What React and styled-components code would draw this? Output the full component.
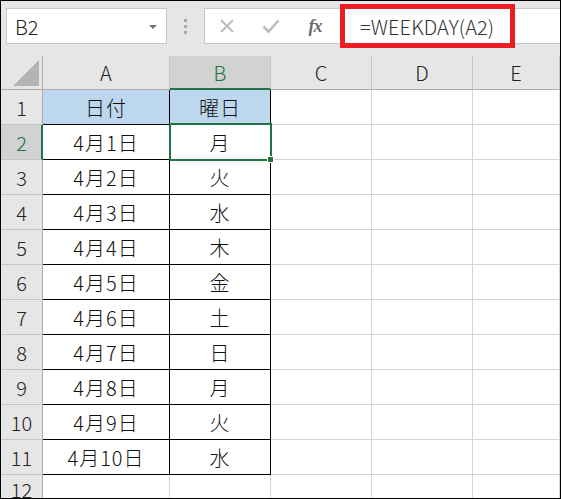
import React from "react";
import styled, { createGlobalStyle, css } from "styled-components";

const GlobalStyle = createGlobalStyle`
	html, body {
		margin: 0;
		padding: 0;
		background: #fff;
		overflow: hidden;
	}
	* {
		box-sizing: border-box;
	}
`;

const FONT = `"Noto Sans CJK JP", "Noto Sans", sans-serif`;
const GREEN = "#217346";

const Frame = styled.div`
	width: 561px;
	height: 499px;
	border: 1px solid #000;
	background: #e6e6e6;
	display: flex;
	flex-direction: column;
	overflow: hidden;
	font-family: ${FONT};
	font-weight: 300;
`;

const Toolbar = styled.div`
	height: 55px;
	flex: none;
	display: flex;
	align-items: flex-start;
	padding: 7px 0 0 5px;
`;

const NameBox = styled.div`
	width: 161px;
	height: 36px;
	background: #fff;
	border: 1px solid #c6c6c6;
	display: flex;
	align-items: center;
	justify-content: space-between;
	padding: 0 9px 0 8px;
	font-size: 20px;
	color: #222;
`;

const Caret = styled.span`
	width: 0;
	height: 0;
	border-left: 4px solid transparent;
	border-right: 4px solid transparent;
	border-top: 4px solid #707070;
	margin-top: 2px;
`;

const Grip = styled.div`
	width: 37px;
	height: 36px;
	display: flex;
	flex-direction: column;
	align-items: center;
	justify-content: center;
	gap: 3px;
	span {
		width: 3px;
		height: 3px;
		background: #a8a8a8;
	}
`;

const FormulaBox = styled.div`
	position: relative;
	flex: 1;
	height: 36px;
	background: #fff;
	border: 1px solid #c6c6c6;
	border-right: none;
	display: flex;
	align-items: center;
`;

const ToolIcon = styled.div`
	width: 44px;
	height: 100%;
	display: flex;
	align-items: center;
	justify-content: center;
	color: #bdbdbd;
`;

const Fx = styled.span`
	font-family: "Liberation Serif", serif;
	font-style: italic;
	font-weight: bold;
	font-size: 18px;
	color: #6e6e6e;
	letter-spacing: -1px;
`;

const FormulaText = styled.div`
	margin-left: 23px;
	font-size: 20px;
	color: #333;
	letter-spacing: 0.1px;
`;

const Highlight = styled.div`
	position: absolute;
	left: 135px;
	top: -5px;
	width: 175px;
	height: 44px;
	border: 5px solid #ec1c24;
	pointer-events: none;
`;

const Sheet = styled.div`
	flex: 1;
	display: grid;
	grid-template-columns: 42px 127px 101px 101px 101px 1fr;
	grid-template-rows: 34px repeat(11, 35px) 1fr;
	background: #fff;
`;

const Corner = styled.div`
	background: #e6e6e6;
	border-right: 1px solid #ababab;
	border-bottom: 1px solid #ababab;
	display: flex;
	align-items: flex-end;
	justify-content: flex-end;
	padding: 0 3px 3px 0;
`;

const ColHead = styled.div`
	background: ${(p) => (p.$active ? "#d2d2d2" : "#e6e6e6")};
	border-right: 1px solid #c4c4c4;
	border-bottom: ${(p) =>
		p.$active ? `2px solid ${GREEN}` : "1px solid #ababab"};
	color: ${(p) => (p.$active ? GREEN : "#222")};
	font-size: 20px;
	display: flex;
	align-items: center;
	justify-content: center;
	padding-top: ${(p) => (p.$active ? "1px" : "0")};
`;

const RowHead = styled.div`
	background: ${(p) => (p.$active ? "#d2d2d2" : "#e6e6e6")};
	border-right: ${(p) =>
		p.$active ? `2px solid ${GREEN}` : "1px solid #ababab"};
	border-bottom: 1px solid #c4c4c4;
	color: ${(p) => (p.$active ? GREEN : "#222")};
	font-size: 20px;
	display: flex;
	align-items: center;
	justify-content: center;
	padding-left: ${(p) => (p.$active ? "1px" : "0")};
`;

const Cell = styled.div`
	position: relative;
	border-right: 1px solid #d4d4d4;
	border-bottom: 1px solid #d4d4d4;
	font-size: 20px;
	color: #111;
	letter-spacing: 1px;
	display: flex;
	align-items: center;
	justify-content: center;
	${(p) =>
		p.$boxed &&
		css`
			border-right-color: #000;
			border-bottom-color: #000;
		`}
	${(p) =>
		p.$head &&
		css`
			background: #bdd7ee;
		`}
	${(p) =>
		p.$selected &&
		css`
			&::after {
				content: "";
				position: absolute;
				top: -2px;
				left: -1px;
				right: -2px;
				bottom: -2px;
				border: 2px solid ${GREEN};
				pointer-events: none;
			}
		`}
`;

const FillHandle = styled.span`
	position: absolute;
	right: -4px;
	bottom: -4px;
	width: 7px;
	height: 7px;
	background: ${GREEN};
	border: 1px solid #fff;
	z-index: 2;
`;

const days = ["月", "火", "水", "木", "金", "土", "日", "月", "火", "水"];

const CrossIcon = () => (
	<svg width="16" height="16" viewBox="0 0 16 16">
		<path d="M2 2 L14 14 M14 2 L2 14" stroke="currentColor" strokeWidth="2" />
	</svg>
);

const CheckIcon = () => (
	<svg width="18" height="16" viewBox="0 0 18 16">
		<path
			d="M1.5 8.5 L6.5 13.5 L16.5 2.5"
			stroke="currentColor"
			strokeWidth="2.6"
			fill="none"
		/>
	</svg>
);

const CornerMark = () => (
	<svg width="26" height="26" viewBox="0 0 26 26">
		<polygon points="26,0 26,26 0,26" fill="#b4b4b4" />
	</svg>
);

const App = () => {
	const columns = ["A", "B", "C", "D", "E"];
	const rows = [];

	for (let r = 1; r <= 12; r++) {
		const inTable = r <= 11;
		rows.push(
			<RowHead key={`h${r}`} $active={r === 2}>
				{r}
			</RowHead>
		);
		rows.push(
			<Cell key={`a${r}`} $boxed={inTable} $head={r === 1}>
				{r === 1 ? "日付" : inTable ? `4月${r - 1}日` : ""}
			</Cell>
		);
		rows.push(
			<Cell
				key={`b${r}`}
				$boxed={inTable}
				$head={r === 1}
				$selected={r === 2}
			>
				{r === 1 ? "曜日" : inTable ? days[r - 2] : ""}
				{r === 2 && <FillHandle />}
			</Cell>
		);
		rows.push(<Cell key={`c${r}`} />);
		rows.push(<Cell key={`d${r}`} />);
		rows.push(<Cell key={`e${r}`} />);
	}

	return (
		<>
			<GlobalStyle />
			<Frame>
				<Toolbar>
					<NameBox>
						B2
						<Caret />
					</NameBox>
					<Grip>
						<span />
						<span />
						<span />
					</Grip>
					<FormulaBox>
						<ToolIcon>
							<CrossIcon />
						</ToolIcon>
						<ToolIcon>
							<CheckIcon />
						</ToolIcon>
						<ToolIcon>
							<Fx>fx</Fx>
						</ToolIcon>
						<FormulaText>=WEEKDAY(A2)</FormulaText>
						<Highlight />
					</FormulaBox>
				</Toolbar>
				<Sheet>
					<Corner>
						<CornerMark />
					</Corner>
					{columns.map((c) => (
						<ColHead key={c} $active={c === "B"}>
							{c}
						</ColHead>
					))}
					{rows}
				</Sheet>
			</Frame>
		</>
	);
};

export default App;
